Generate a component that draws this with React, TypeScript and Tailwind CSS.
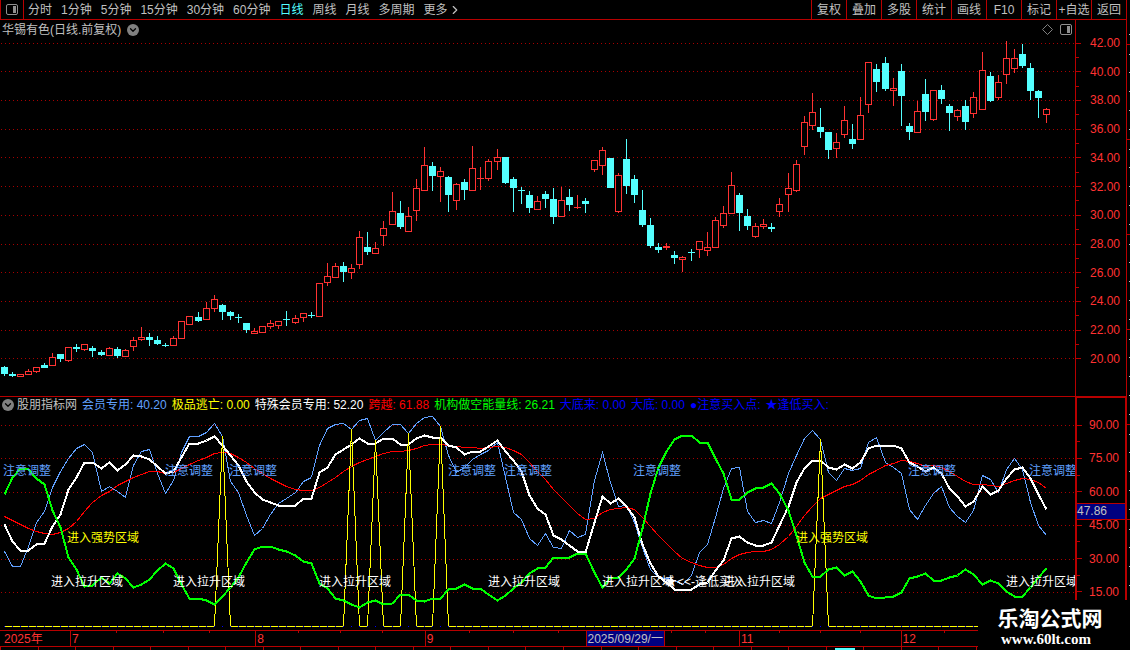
import { ChevronDown, ChevronRight } from "lucide-react";

type Candle = ["up" | "down", number, number, number, number];

const CHART_WIDTH = 1075;

const periods = [
  "分时",
  "1分钟",
  "5分钟",
  "15分钟",
  "30分钟",
  "60分钟",
  "日线",
  "周线",
  "月线",
  "多周期",
];

const tools = ["复权", "叠加", "多股", "统计", "画线", "F10", "标记", "+自选", "返回"];

const prices = [42, 40, 38, 36, 34, 32, 30, 28, 26, 24, 22, 20];
const priceLines = [43, 71, 100, 129, 157, 186, 215, 244, 272, 301, 330, 358];

const levels = [90, 75, 60, 45, 30, 15];
const levelLines = [425, 458, 492, 525, 559, 592];

// direction, high, body top, body bottom, low
const candles: Candle[] = [
  ["down", 366, 367, 374, 376], ["down", 372, 374, 376, 377], ["up", 374, 374, 377, 377],
  ["up", 369, 371, 375, 375], ["up", 367, 367, 372, 373], ["down", 363, 365, 368, 368],
  ["up", 353, 357, 366, 366], ["down", 354, 354, 359, 362], ["up", 347, 347, 361, 362],
  ["down", 344, 347, 349, 352], ["up", 344, 344, 350, 351], ["down", 346, 348, 351, 357],
  ["down", 350, 352, 355, 356], ["up", 347, 348, 356, 356], ["down", 347, 349, 356, 358],
  ["up", 349, 350, 357, 357], ["up", 337, 340, 347, 351], ["up", 327, 337, 340, 341],
  ["down", 333, 337, 340, 346], ["down", 336, 340, 344, 345], ["down", 343, 345, 346, 347],
  ["up", 336, 338, 346, 346], ["up", 321, 321, 339, 339], ["up", 316, 316, 325, 325],
  ["down", 312, 317, 321, 322], ["up", 302, 308, 320, 320], ["up", 295, 299, 309, 312],
  ["down", 304, 305, 312, 320], ["down", 311, 312, 316, 320], ["down", 314, 317, 318, 323],
  ["down", 323, 323, 330, 333], ["up", 328, 331, 334, 334], ["up", 326, 326, 333, 333],
  ["up", 320, 323, 327, 329], ["up", 321, 321, 326, 329], ["down", 311, 319, 320, 326],
  ["up", 315, 318, 323, 324], ["up", 313, 313, 318, 322], ["down", 312, 315, 316, 318],
  ["up", 283, 283, 317, 317], ["up", 263, 276, 283, 286], ["up", 263, 266, 278, 278],
  ["down", 262, 266, 272, 282], ["up", 264, 268, 273, 279], ["up", 231, 237, 265, 269],
  ["down", 232, 247, 252, 255], ["up", 242, 248, 254, 254], ["up", 221, 228, 236, 246],
  ["up", 192, 211, 225, 225], ["down", 201, 213, 227, 229], ["up", 207, 216, 232, 232],
  ["up", 179, 188, 211, 221], ["up", 147, 165, 191, 191], ["down", 162, 166, 176, 191],
  ["up", 167, 171, 177, 202], ["down", 176, 177, 195, 212], ["up", 183, 184, 201, 210],
  ["down", 179, 182, 190, 200], ["up", 146, 168, 191, 191], ["up", 167, 178, 179, 190],
  ["up", 159, 161, 179, 181], ["up", 149, 157, 162, 170], ["down", 157, 157, 183, 184],
  ["down", 177, 179, 188, 212], ["down", 187, 190, 191, 204], ["down", 191, 195, 208, 213],
  ["up", 196, 201, 210, 210], ["down", 191, 194, 199, 208], ["down", 188, 199, 217, 224],
  ["up", 187, 200, 217, 217], ["down", 189, 197, 205, 211], ["up", 195, 207, 208, 209],
  ["down", 198, 201, 204, 213], ["up", 160, 160, 170, 172], ["up", 147, 150, 166, 175],
  ["down", 158, 158, 188, 188], ["up", 173, 175, 212, 213], ["down", 139, 159, 186, 194],
  ["down", 175, 179, 195, 203], ["down", 190, 210, 225, 227], ["down", 218, 225, 246, 248],
  ["down", 243, 247, 250, 253], ["up", 243, 246, 248, 250], ["down", 251, 255, 258, 264],
  ["up", 256, 257, 260, 272], ["down", 249, 252, 253, 261], ["up", 241, 241, 250, 258],
  ["up", 232, 247, 251, 256], ["up", 217, 220, 248, 248], ["up", 206, 213, 226, 228],
  ["up", 172, 185, 214, 214], ["down", 193, 195, 213, 231], ["down", 209, 216, 226, 230],
  ["up", 223, 226, 237, 238], ["up", 219, 224, 227, 229], ["down", 223, 227, 229, 232],
  ["up", 198, 204, 212, 217], ["up", 173, 188, 195, 212], ["up", 160, 164, 191, 192],
  ["up", 116, 122, 147, 155], ["up", 93, 112, 126, 130], ["down", 108, 127, 132, 138],
  ["down", 132, 132, 150, 159], ["up", 133, 142, 149, 158], ["up", 106, 120, 135, 138],
  ["down", 124, 139, 144, 149], ["up", 97, 115, 140, 140], ["up", 62, 62, 105, 113],
  ["down", 64, 69, 82, 92], ["down", 57, 63, 89, 91], ["up", 78, 88, 91, 106],
  ["down", 64, 71, 96, 126], ["down", 123, 126, 132, 140], ["up", 101, 111, 133, 133],
  ["down", 79, 94, 112, 121], ["up", 90, 90, 120, 121], ["down", 85, 90, 99, 104],
  ["down", 104, 106, 113, 131], ["up", 109, 110, 117, 121], ["down", 100, 106, 122, 130],
  ["up", 92, 97, 114, 118], ["up", 52, 70, 110, 110], ["down", 72, 76, 101, 102],
  ["up", 75, 82, 98, 100], ["up", 41, 58, 75, 84], ["up", 49, 58, 69, 73],
  ["down", 44, 54, 66, 68], ["down", 63, 68, 91, 100], ["down", 90, 91, 98, 118],
  ["up", 108, 109, 115, 123],
];

const member = [
  551, 566, 566, 546, 522, 511, 487, 471, 458, 448, 444, 452, 491, 486, 491, 497, 465, 451, 449, 473,
  493, 480, 452, 436, 436, 432, 423, 436, 481, 492, 515, 535, 528, 514, 503, 498, 492, 481, 477, 445,
  428, 424, 423, 429, 420, 418, 440, 432, 424, 424, 433, 423, 417, 416, 426, 455, 472, 467, 459, 454,
  450, 442, 477, 512, 519, 538, 545, 533, 547, 548, 530, 537, 534, 480, 452, 482, 506, 505, 522, 547,
  569, 577, 578, 580, 584, 575, 552, 544, 517, 488, 468, 467, 511, 522, 520, 523, 502, 473, 455, 438,
  430, 439, 472, 480, 468, 470, 468, 442, 437, 462, 467, 473, 509, 519, 505, 493, 486, 507, 516, 522,
  510, 475, 479, 492, 469, 458, 469, 502, 525, 535,
];

const special = [
  524, 541, 550, 550, 544, 543, 526, 514, 489, 477, 462, 462, 468, 462, 470, 464, 455, 456, 459, 466,
  473, 471, 457, 443, 443, 440, 436, 445, 455, 465, 481, 492, 499, 502, 505, 505, 505, 498, 498, 472,
  467, 454, 449, 444, 438, 443, 443, 438, 438, 444, 444, 438, 435, 437, 437, 445, 447, 454, 451, 451,
  446, 440, 451, 460, 471, 495, 508, 514, 535, 539, 545, 551, 552, 522, 496, 503, 498, 506, 517, 544,
  563, 576, 582, 589, 589, 589, 584, 582, 570, 560, 538, 536, 542, 545, 545, 542, 525, 506, 482, 468,
  460, 460, 467, 469, 464, 468, 462, 448, 445, 445, 445, 448, 462, 466, 471, 467, 473, 488, 496, 506,
  501, 486, 494, 490, 478, 469, 467, 478, 494, 509,
];

const crossing = [
  516, 520, 524, 528, 531, 533, 534, 532, 528, 521, 511, 502, 495, 491, 485, 481, 477, 474, 471, 471,
  473, 472, 468, 464, 460, 457, 453, 452, 453, 457, 462, 468, 473, 478, 482, 486, 489, 490, 490, 487,
  482, 477, 471, 466, 462, 459, 456, 453, 451, 451, 450, 448, 445, 444, 444, 445, 446, 447, 447, 448,
  447, 446, 447, 450, 454, 462, 471, 479, 489, 497, 505, 513, 519, 518, 512, 509, 508, 507, 509, 517,
  526, 535, 543, 551, 558, 562, 565, 567, 567, 564, 558, 554, 552, 551, 551, 549, 544, 536, 526, 515,
  506, 498, 494, 490, 486, 484, 480, 474, 470, 465, 463, 460, 461, 463, 466, 465, 467, 471, 476, 481,
  484, 484, 485, 486, 483, 480, 478, 479, 482, 488,
];

const energy = [
  494, 477, 468, 469, 478, 484, 510, 527, 557, 569, 586, 585, 577, 583, 573, 578, 587, 584, 579, 570,
  563, 568, 584, 598, 598, 600, 604, 596, 587, 577, 562, 549, 546, 546, 549, 551, 555, 561, 563, 583,
  588, 598, 600, 604, 607, 602, 600, 604, 603, 594, 594, 600, 601, 598, 598, 589, 588, 584, 588, 588,
  594, 600, 595, 588, 582, 573, 568, 567, 557, 557, 557, 553, 553, 572, 587, 577, 577, 569, 558, 528,
  493, 467, 451, 439, 435, 435, 442, 442, 458, 473, 499, 499, 492, 488, 487, 483, 493, 510, 535, 562,
  576, 576, 569, 567, 575, 571, 581, 595, 598, 597, 596, 592, 578, 576, 573, 580, 580, 577, 575, 569,
  574, 584, 580, 583, 591, 596, 596, 587, 577, 568,
];

// bars on which the yellow signal jumps up to the member line
const signals = [27, 43, 46, 50, 54, 101];
const BASELINE = 626;
const escape = member.map((y, i) => (signals.includes(i) ? y : BASELINE));

const legend = [
  { text: "股朋指标网", color: "text-[#c0c0c0]" },
  { text: "会员专用: 40.20", color: "text-[#60a0ff]" },
  { text: "极品逃亡: 0.00", color: "text-[#ffff00]" },
  { text: "特殊会员专用: 52.20", color: "text-white" },
  { text: "跨越: 61.88", color: "text-[#ff0000]" },
  { text: "机构做空能量线: 26.21", color: "text-[#00ff00]" },
  { text: "大底来: 0.00", color: "text-[#0000ff]" },
  { text: "大底: 0.00", color: "text-[#0000ff]" },
  { text: "●注意买入点:", color: "text-[#0000ff]" },
  { text: "★逢低买入:", color: "text-[#0000ff]" },
];

const notes = [
  { text: "注意调整", style: "top-[49px] text-[#60a0ff]", at: [3, 165, 229, 448, 504, 633, 908, 1029] },
  { text: "进入强势区域", style: "top-[116px] text-[#ffff00]", at: [67, 796] },
  { text: "进入拉升区域", style: "top-[160px] text-white", at: [51, 173, 319, 488, 602, 723, 1006] },
  { text: "★<<-逢低买入", style: "top-[160px] text-white", at: [665] },
];

const months = [
  { label: "2025年", width: "grow-[67]", first: true },
  { label: "7", width: "grow-[186]" },
  { label: "8", width: "grow-[170]" },
  { label: "9", width: "grow-[178]" },
  { label: "", width: "grow-[137]" },
  { label: "11", width: "grow-[162]" },
  { label: "12", width: "grow-[175]" },
];

const barX = (i: number) => 4 + i * 8 + Math.floor((i > 48 ? i - 1 : i) / 12);

const toPoints = (ys: number[]) => ys.map((y, i) => `${barX(i) + 0.5},${y + 0.5}`).join(" ");

const GridLines = ({ ys }: { ys: number[] }) => (
  <>
    {ys.map((y) => (
      <line
        key={y}
        x1={1}
        x2={CHART_WIDTH}
        y1={y + 0.5}
        y2={y + 0.5}
        stroke="#a80000"
        strokeDasharray="1 3"
      />
    ))}
  </>
);

const CandleBar = ({ candle, x }: { candle: Candle; x: number }) => {
  const [kind, high, top, bottom, low] = candle;

  if (kind === "down" || bottom - top < 3) {
    return (
      <g fill={kind === "down" ? "#54ffff" : "#ff3232"}>
        <rect x={x} y={high} width={1} height={low - high} />
        <rect x={x - 3} y={top} width={7} height={bottom - top} />
      </g>
    );
  }

  return (
    <g fill="#ff3232">
      <rect x={x} y={high} width={1} height={top - high} />
      <rect x={x} y={bottom} width={1} height={low - bottom} />
      <rect
        x={x - 2.5}
        y={top + 0.5}
        width={6}
        height={bottom - top - 1}
        fill="#000"
        stroke="#ff3232"
      />
    </g>
  );
};

const PriceChart = () => (
  <svg
    className="block h-[357px] w-full"
    viewBox={`0 39 ${CHART_WIDTH} 357`}
    preserveAspectRatio="none"
    shapeRendering="crispEdges"
  >
    <GridLines ys={priceLines} />
    {candles.map((candle, i) => (
      <CandleBar key={i} candle={candle} x={barX(i)} />
    ))}
  </svg>
);

const IndicatorChart = () => (
  <div className="relative overflow-hidden">
    <svg
      className="block h-[216px] w-full"
      viewBox={`0 414 ${CHART_WIDTH} 216`}
      preserveAspectRatio="none"
      shapeRendering="crispEdges"
      fill="none"
    >
      <GridLines ys={levelLines} />
      <polyline points={toPoints(member)} stroke="#60a0ff" />
      <polyline points={toPoints(crossing)} stroke="#ff0000" />
      <polyline points={toPoints(special)} stroke="#fff" strokeWidth={2} />
      <polyline points={toPoints(escape)} stroke="#ffff00" />
      <polyline points={toPoints(energy)} stroke="#00ff00" strokeWidth={2} />
      {candles.map((_, i) => (
        <rect key={i} x={barX(i)} y={BASELINE} width={1} height={1} fill="#0000ff" />
      ))}
    </svg>
    {notes.map(({ text, style, at }) =>
      at.map((x) => (
        <span
          key={`${text}${x}`}
          className={`absolute leading-4 whitespace-nowrap ${style}`}
          style={{ left: `${(x / CHART_WIDTH) * 100}%` }}
        >
          {text}
        </span>
      ))
    )}
  </div>
);

const AxisLabels = ({ values }: { values: number[] }) => (
  <>
    {values.map((value, i) => [
      i > 0 && <i key={`tick${value}`} className="h-px w-[3px] shrink-0 bg-[#b80000]" />,
      <div key={value} className="flex h-3 shrink-0 items-center">
        <i className="h-px w-[5px] bg-[#b80000]" />
        <span className="flex-1 pr-1.5 text-right leading-3 text-[#ff3232]">
          {value.toFixed(2)}
        </span>
      </div>,
    ])}
  </>
);

const RoundToggle = ({ label }: { label: string }) => (
  <button
    aria-label={label}
    className="flex size-3 shrink-0 items-center justify-center rounded-full bg-[#808080] text-black"
  >
    <ChevronDown size={10} strokeWidth={3} />
  </button>
);

const PanelIcon = () => (
  <svg width="12" height="11" viewBox="0 0 12 11" fill="none">
    <rect x="0.5" y="0.5" width="11" height="10" rx="1.5" stroke="#909090" />
    <rect x="7" y="2" width="3" height="7" fill="#909090" />
  </svg>
);

const Toolbar = () => (
  <header className="flex h-5 items-stretch justify-between border-b border-l border-[#b80000] text-[#c0c0c0]">
    <nav className="flex items-stretch">
      <button
        aria-label="侧栏"
        className="flex w-[23px] items-center justify-center border-r border-[#b80000]"
      >
        <PanelIcon />
      </button>
      <div className="flex items-center gap-[9px] pl-1 whitespace-nowrap">
        {periods.map((period) => (
          <button key={period} className={period === "日线" ? "text-[#54ffff]" : ""}>
            {period}
          </button>
        ))}
        <button className="flex items-center">
          更多
          <ChevronRight size={14} strokeWidth={2} />
        </button>
      </div>
    </nav>
    <div className="flex">
      {tools.map((tool) => (
        <button
          key={tool}
          className="flex w-[35px] items-center justify-center border-l border-[#b80000] whitespace-nowrap"
        >
          {tool}
        </button>
      ))}
    </div>
  </header>
);

const TimeAxis = () => (
  <div className="relative flex h-[17px] border-y border-[#b80000] pr-[51px] text-[#ff3232]">
    {months.map(({ label, width, first }) => (
      <div
        key={label}
        className={`relative flex basis-0 items-center ${width} ${
          first ? "pl-1" : "border-l border-[#b80000] pl-px"
        }`}
      >
        <span className="w-0 whitespace-nowrap">{label}</span>
        {!first && (
          <div className="absolute inset-x-0 top-0 flex justify-evenly">
            <i className="h-0.5 w-px bg-[#b80000]" />
            <i className="h-0.5 w-px bg-[#b80000]" />
            <i className="h-0.5 w-px bg-[#b80000]" />
          </div>
        )}
      </div>
    ))}
    <span className="absolute inset-y-0 left-[52%] flex items-center border-x border-[#b80000] bg-[#000080] px-px whitespace-nowrap text-[#c0c0c0]">
      2025/09/29/一
    </span>
  </div>
);

const BottomTabs = () => (
  <div className="flex h-[3px] overflow-hidden">
    {Array.from({ length: 30 }, (_, i) => (
      <div key={i} className="flex flex-1 justify-center border-l border-[#b80000]">
        {i === 22 && <i className="mt-px w-5 bg-[#54ffff]" />}
      </div>
    ))}
  </div>
);

const SideStrip = () => (
  <aside className="flex w-[3px] shrink-0 flex-col overflow-hidden pt-[25px]">
    {Array.from({ length: 30 }, (_, i) => (
      <div
        key={i}
        className={`flex h-[19px] shrink-0 items-center justify-end ${
          i % 5 === 1 ? "border-t border-[#b80000]" : ""
        }`}
      >
        <i className="h-px w-px bg-[#c0c0c0]" />
      </div>
    ))}
  </aside>
);

const App = () => {
  return (
    <div className="relative flex h-screen overflow-hidden bg-black font-['Liberation_Sans','Noto_Sans_CJK_SC',sans-serif] text-[12px] leading-4">
      <div className="flex min-w-0 flex-1 flex-col border-r border-[#b80000]">
        <Toolbar />

        <section className="flex">
          <div className="min-w-0 flex-1">
            <div className="flex h-[19px] items-center justify-between pr-[3px] pl-0.5">
              <h1 className="flex items-center gap-1.5 text-[#c0c0c0]">
                华锡有色(日线.前复权)
                <RoundToggle label="主图菜单" />
              </h1>
              <div className="flex items-center gap-[7px]">
                <svg width="11" height="11" viewBox="0 0 11 11" fill="none">
                  <path d="M5.5 0.5L10.5 5.5L5.5 10.5L0.5 5.5Z" stroke="#808080" />
                </svg>
                <PanelIcon />
              </div>
            </div>
            <PriceChart />
          </div>
          <div className="flex w-[51px] shrink-0 flex-col justify-between border-l border-[#b80000] pt-[17px] pb-[31px]">
            <AxisLabels values={prices} />
          </div>
        </section>

        <section className="flex">
          <div className="min-w-0 flex-1 border-t border-[#b80000]">
            <div className="flex h-[17px] items-center gap-[5px] pb-0.5 pl-0.5 whitespace-nowrap">
              <div className="flex items-center gap-[3px]">
                <RoundToggle label="副图菜单" />
                <span className={legend[0].color}>{legend[0].text}</span>
              </div>
              {legend.slice(1).map(({ text, color }) => (
                <span key={text} className={color}>
                  {text}
                </span>
              ))}
            </div>
            <IndicatorChart />
          </div>
          <div className="relative flex w-[51px] shrink-0 flex-col justify-between border-2 border-r border-b-0 border-[#b80000] pt-[21px] pb-[32px]">
            <AxisLabels values={levels} />
            <span className="absolute inset-x-0 top-[105px] border-y border-[#b80000] bg-[#000080] leading-[15px] text-[#c0c0c0]">
              47.86
            </span>
          </div>
        </section>

        <TimeAxis />
        <BottomTabs />
      </div>

      <SideStrip />

      <footer className="absolute right-0 bottom-0 flex h-[50px] w-[152px] flex-col items-center bg-black pt-2 pr-2 text-white">
        <strong className="text-[21px] leading-[22px] font-bold">乐淘公式网</strong>
        <a
          href="#"
          className="pr-2 font-['Liberation_Serif',serif] text-[15px] leading-[18px] font-bold"
        >
          www.60lt.com
        </a>
      </footer>
    </div>
  );
};

export default App;
